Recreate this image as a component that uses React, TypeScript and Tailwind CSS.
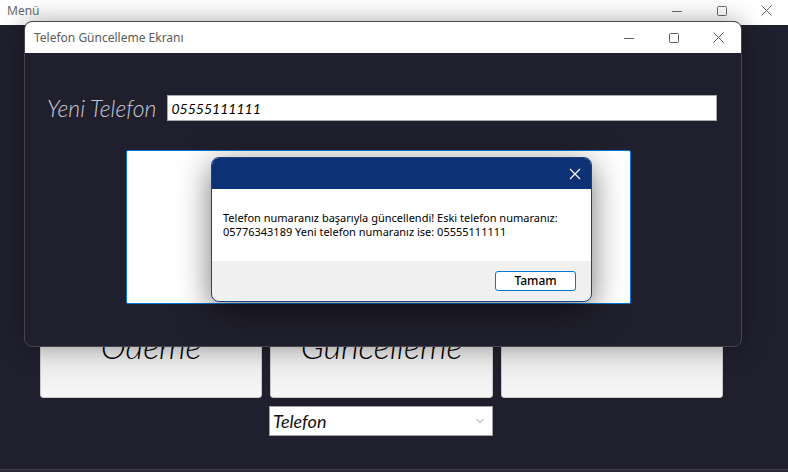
import { ChevronDown } from "lucide-react";

const UI_FONT = "font-['Noto_Sans',sans-serif]";
const FANCY = "font-['Lato',sans-serif] italic";

function WinControls({ tone = "#5c5c5c" }: { tone?: string }) {
  return (
    <div className="flex items-center h-full">
      <div className="w-[45px] h-full flex items-center justify-center">
        <svg width="10" height="10" viewBox="0 0 10 10">
          <path d="M0 5.5h10" stroke={tone} strokeWidth="1" />
        </svg>
      </div>
      <div className="w-[45px] h-full flex items-center justify-center">
        <svg width="10" height="10" viewBox="0 0 10 10">
          <rect x="0.5" y="0.5" width="9" height="9" rx="1" fill="none" stroke={tone} strokeWidth="1" />
        </svg>
      </div>
      <div className="w-[45px] h-full flex items-center justify-center">
        <svg width="11" height="11" viewBox="0 0 11 11">
          <path d="M0.5 0.5l10 10M10.5 0.5l-10 10" stroke={tone} strokeWidth="1" />
        </svg>
      </div>
    </div>
  );
}

function MenuButton({ label }: { label?: string }) {
  return (
    <div className="h-[106px] rounded-[3px] bg-gradient-to-b from-[#d4d4d4] to-[#f7f7f7] border border-[#c8c8c8] flex items-center justify-center">
      <span className={`${FANCY} font-light text-[34px] text-black`}>{label}</span>
    </div>
  );
}

function MessageBox() {
  return (
    <div className="absolute left-[84px] top-[6px] w-[381px] h-[145px] rounded-[8px] border border-[#22407f] bg-[#f0f0f0] overflow-hidden shadow-[0_8px_32px_rgba(0,0,0,0.55)] flex flex-col">
      <div className="h-[31px] bg-[#0c3275] flex items-center justify-end pr-[10px]">
        <svg width="12" height="12" viewBox="0 0 12 12">
          <path d="M1 1l10 10M11 1L1 11" stroke="#ffffff" strokeWidth="1.2" />
        </svg>
      </div>
      <div className={`h-[72px] bg-white px-[11px] pt-[22px] text-[11px] leading-[14px] text-black ${UI_FONT}`}>
        Telefon numaranız başarıyla güncellendi! Eski telefon numaranız: 05776343189 Yeni telefon numaranız ise: 05555111111
      </div>
      <div className="flex-1 flex items-start justify-end pt-[10px] pr-[15px]">
        <div className={`w-[81px] h-[20px] bg-white border border-[#0078d4] rounded-[3px] flex items-center justify-center text-[12px] font-medium text-black ${UI_FONT}`}>
          Tamam
        </div>
      </div>
    </div>
  );
}

function PhoneWindow() {
  return (
    <div className="absolute left-[24px] top-[21px] w-[718px] h-[326px] rounded-[8px] border border-[#46464f] bg-[#201f2d] overflow-hidden shadow-[0_0_24px_rgba(0,0,0,0.35)] flex flex-col">
      <div className="h-[31px] bg-white flex items-center justify-between pl-[9px] shrink-0">
        <span className={`text-[12px] text-[#5a5a5a] ${UI_FONT}`}>Telefon Güncelleme Ekranı</span>
        <WinControls />
      </div>
      <div className="relative flex-1 px-[22px]">
        <div className="flex items-center gap-[11px] mt-[42px] h-[26px]">
          <span className={`${FANCY} font-light text-[23px] leading-[26px] text-[#c9c8d2]`}>Yeni Telefon</span>
          <div className={`w-[550px] h-[26px] bg-white border border-[#a9a9a9] flex items-center px-[3px] ${FANCY} text-[14px] text-black`}>
            05555111111
          </div>
        </div>
        <div className="relative ml-[79px] mt-[29px] w-[505px] h-[154px] bg-white border border-[#0078d4] rounded-[2px]">
          <MessageBox />
        </div>
      </div>
    </div>
  );
}

export default function App() {
  return (
    <div className="relative w-[788px] h-[472px] overflow-hidden bg-[#201f2d] flex flex-col">
      <div className="h-[25px] bg-white flex items-center justify-between pl-[7px] shrink-0">
        <span className={`text-[12px] text-[#6a6a6a] ${UI_FONT} -mt-[4px]`}>Menü</span>
        <div className="h-full -mr-[1px] -mt-[4px]">
          <WinControls tone="#6a6a6a" />
        </div>
      </div>
      <div className="flex-1 px-[40px] pt-[267px]">
        <div className="grid grid-cols-3 gap-[8px] w-[683px]">
          <MenuButton label="Ödeme" />
          <MenuButton label="Güncelleme" />
          <MenuButton />
        </div>
        <div className="ml-[229px] mt-[8px] w-[224px] h-[30px] bg-white border border-[#a0a0a0] flex items-center justify-between pl-[3px] pr-[6px]">
          <span className={`${FANCY} text-[18px] text-[#111]`}>Telefon</span>
          <ChevronDown size={12} strokeWidth={1.3} color="#555" />
        </div>
      </div>
      <div className="h-[3px] bg-[#2b2a35] border-t border-[#3c3b46] shrink-0" />
      <PhoneWindow />
    </div>
  );
}
